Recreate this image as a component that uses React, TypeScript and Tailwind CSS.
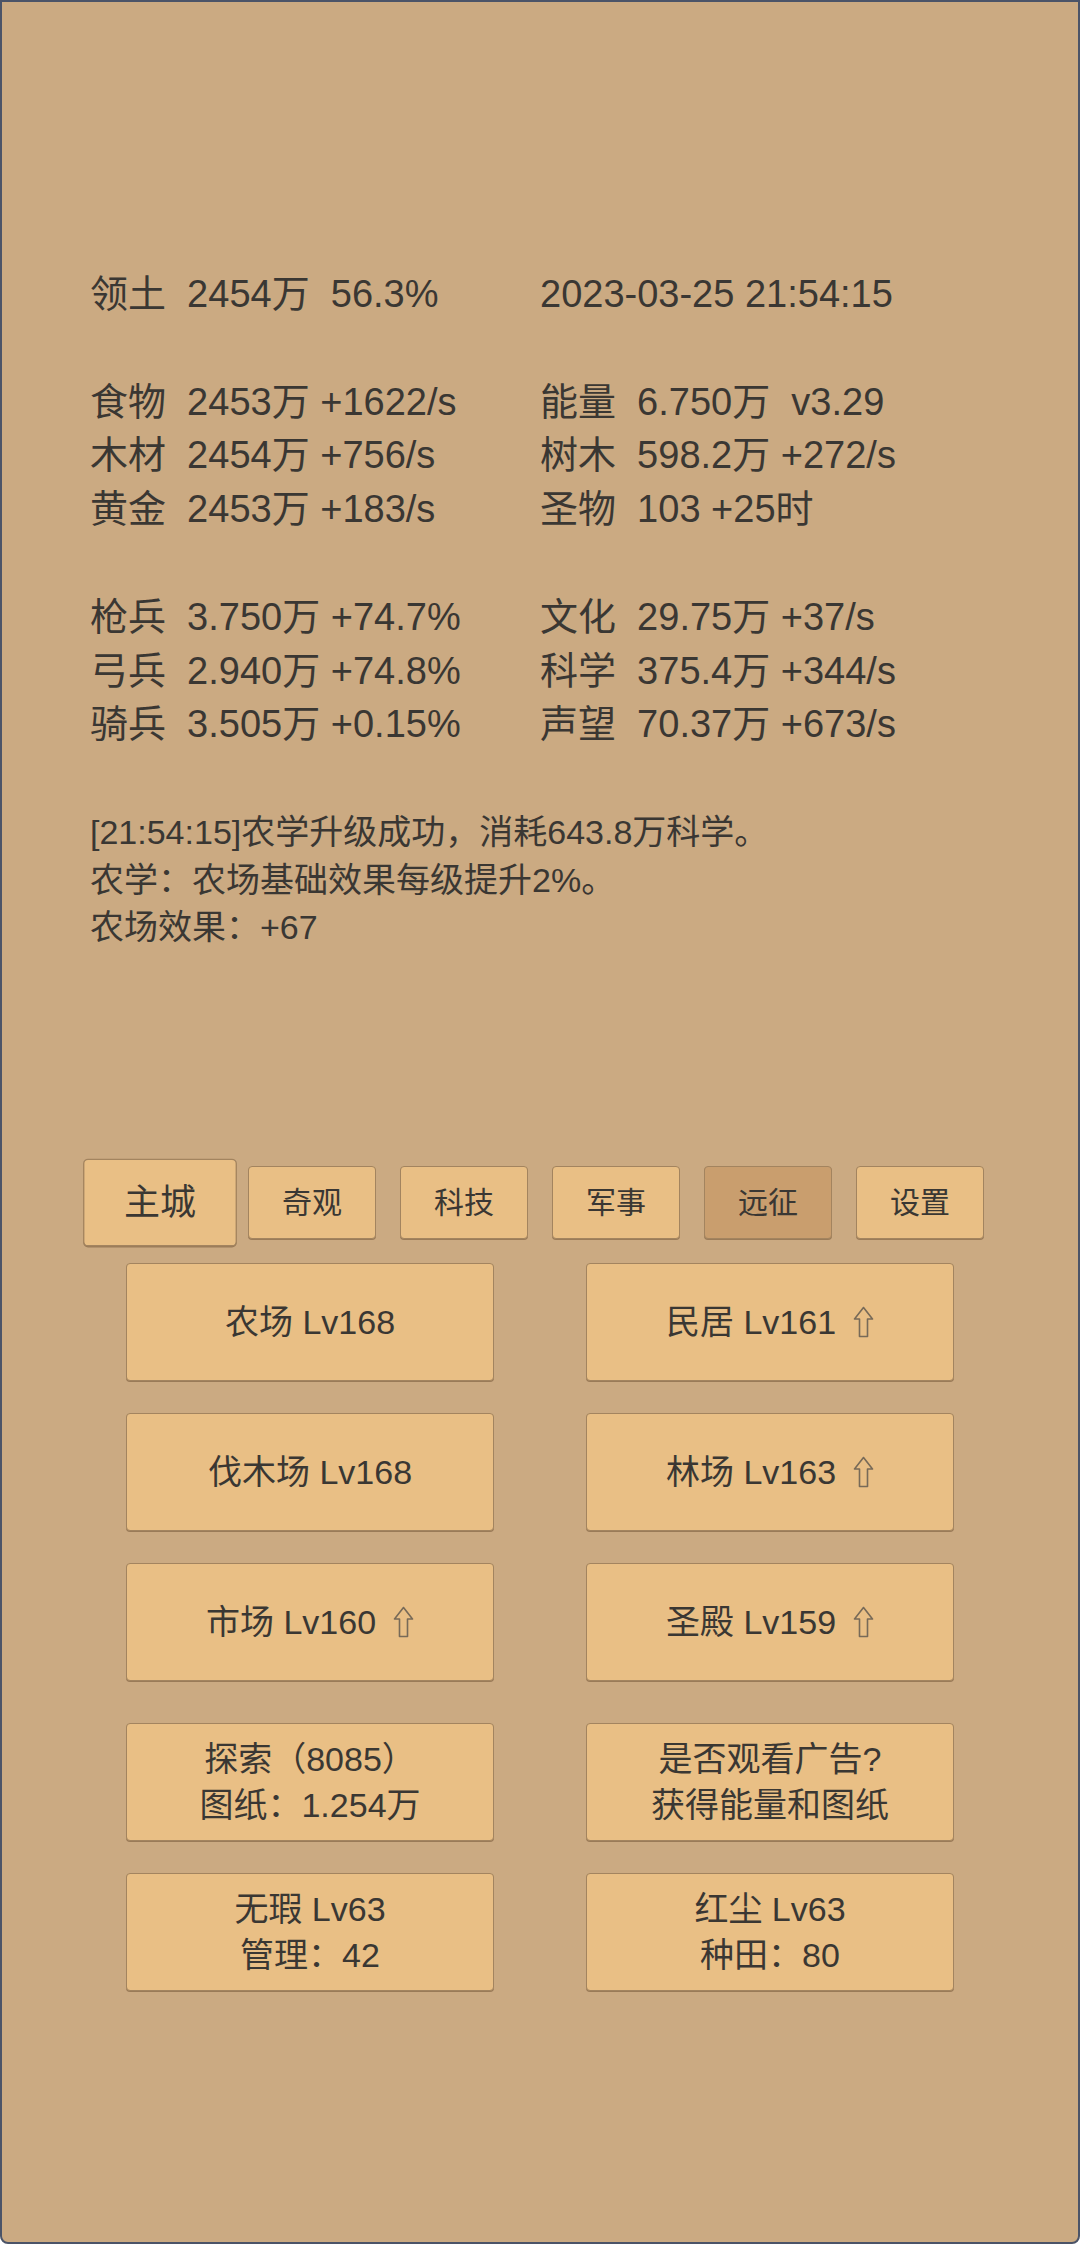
const stats: [string, string][] = [
  ["领土  2454万  56.3%", "2023-03-25 21:54:15"],
  ["", ""],
  ["食物  2453万 +1622/s", "能量  6.750万  v3.29"],
  ["木材  2454万 +756/s", "树木  598.2万 +272/s"],
  ["黄金  2453万 +183/s", "圣物  103 +25时"],
  ["", ""],
  ["枪兵  3.750万 +74.7%", "文化  29.75万 +37/s"],
  ["弓兵  2.940万 +74.8%", "科学  375.4万 +344/s"],
  ["骑兵  3.505万 +0.15%", "声望  70.37万 +673/s"],
];

const logs = [
  "[21:54:15]农学升级成功，消耗643.8万科学。",
  "农学：农场基础效果每级提升2%。",
  "农场效果：+67",
];

const tabs = ["主城", "奇观", "科技", "军事", "远征", "设置"];

type Btn = { lines: string[]; up?: boolean };

const rows: Btn[][] = [
  [{ lines: ["农场 Lv168"] }, { lines: ["民居 Lv161"], up: true }],
  [{ lines: ["伐木场 Lv168"] }, { lines: ["林场 Lv163"], up: true }],
  [{ lines: ["市场 Lv160"], up: true }, { lines: ["圣殿 Lv159"], up: true }],
  [
    { lines: ["探索（8085）", "图纸：1.254万"] },
    { lines: ["是否观看广告?", "获得能量和图纸"] },
  ],
  [
    { lines: ["无瑕 Lv63", "管理：42"] },
    { lines: ["红尘 Lv63", "种田：80"] },
  ],
];

function UpArrow() {
  return (
    <svg width="21" height="32" viewBox="0 0 21 32" className="ml-[17px] shrink-0">
      <path
        d="M10.5 1.5 L19.5 13 L14.5 13 L14.5 30.5 L6.5 30.5 L6.5 13 L1.5 13 Z"
        fill="none"
        stroke="#776a58"
        strokeWidth="1.6"
        strokeLinejoin="round"
      />
    </svg>
  );
}

function BuildButton({ b }: { b: Btn }) {
  return (
    <button className="w-[368px] h-[118px] bg-[#e9bf85] border border-[#a3845f] rounded-[4px] shadow-[0_1px_0_#9a7b58] flex flex-col items-center justify-center text-[34px] leading-[46px] text-[#3a3733]">
      {b.lines.map((l, i) => (
        <div key={i} className="flex items-center whitespace-pre">
          <span>{l}</span>
          {b.up && <UpArrow />}
        </div>
      ))}
    </button>
  );
}

export default function App() {
  return (
    <div className="w-[1080px] h-[2244px] bg-[#cbaa82] border-2 border-[#4b5468] rounded-b-[8px] overflow-hidden font-['Liberation_Sans','Noto_Sans_CJK_SC',sans-serif] text-[#3a3733]">
      <div className="pt-[266px] pl-[88px] grid grid-cols-[450px_1fr] text-[38px] leading-[53.8px]">
        {stats.map((r, i) =>
          r[0] === "" ? (
            <div key={i} className="col-span-2 h-[53.8px]" />
          ) : (
            <div key={i} className="contents">
              <div className="whitespace-pre">{r[0]}</div>
              <div className="whitespace-pre">{r[1]}</div>
            </div>
          )
        )}
      </div>

      <div className="mt-[57px] pl-[88px] text-[34px] leading-[47.5px]">
        {logs.map((l, i) => (
          <div key={i} className="whitespace-pre">{l}</div>
        ))}
      </div>

      <div className="mt-[214px] flex justify-center gap-[24px]">
        {tabs.map((t, i) => (
          <button
            key={t}
            className={
              "w-[128px] h-[73px] border border-[#a3845f] rounded-[4px] shadow-[0_1px_0_#9a7b58] text-[30px] flex items-center justify-center text-[#3a3733] " +
              (i === 0 ? "scale-[1.2] bg-[#e9bf85]" : i === 4 ? "bg-[#c99e6e]" : "bg-[#e9bf85]")
            }
          >
            {t}
          </button>
        ))}
      </div>

      <div className="mt-[24px] flex flex-col items-center">
        {rows.map((r, i) => (
          <div
            key={i}
            className={"flex gap-[92px] " + (i === 0 ? "" : i === 3 ? "mt-[42px]" : "mt-[32px]")}
          >
            {r.map((b, j) => (
              <BuildButton key={j} b={b} />
            ))}
          </div>
        ))}
      </div>
    </div>
  );
}
